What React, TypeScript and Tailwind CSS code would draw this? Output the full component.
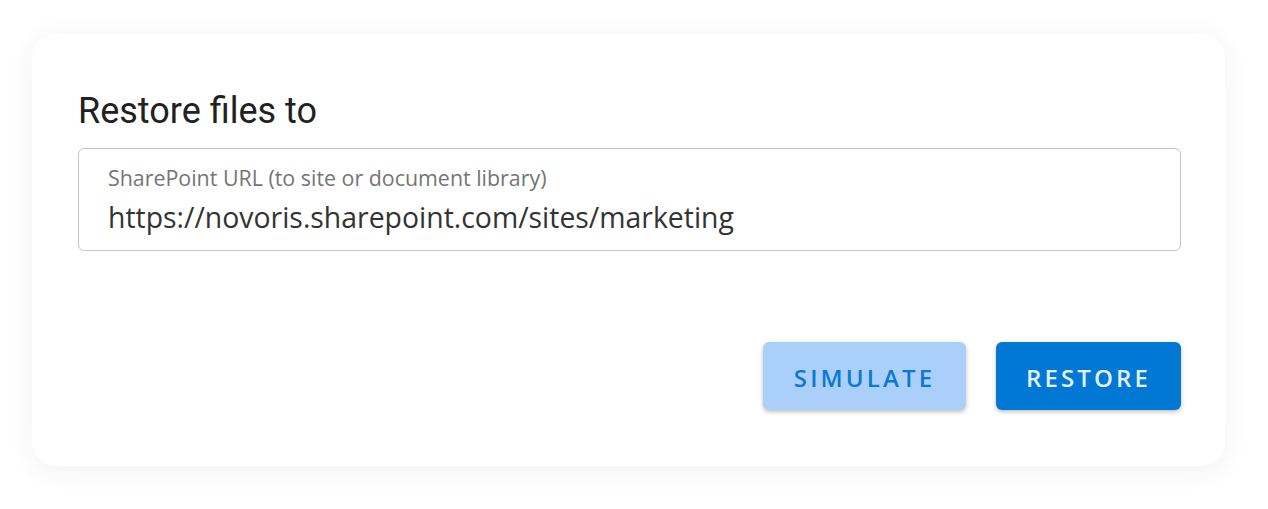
import React from 'react';

export default function App() {
  return (
    <div className="min-h-[509px] w-[1268px] bg-white pl-[32px] pt-[34px]">
      <div className="flex h-[432px] w-[1193px] flex-col rounded-[24px] bg-white pl-[46px] pr-[44px] pt-[57px] shadow-[0_4px_28px_rgba(0,0,0,0.06)]">
        <h1 className="text-[36px] leading-[40px] text-[#212121] [font-family:Roboto,sans-serif]">
          Restore files to
        </h1>
        <div className="mt-[17px] flex h-[103px] flex-col rounded-[6px] border border-[#c4c4c4] px-[29px] pt-[17px] [font-family:'Open_Sans',sans-serif]">
          <label className="text-[21.4px] leading-[24px] text-[#757575]">
            SharePoint URL (to site or document library)
          </label>
          <div className="mt-[9px] text-[28.4px] leading-[36px] text-[#333333]">
            https://novoris.sharepoint.com/sites/marketing
          </div>
        </div>
        <div className="mt-[91px] flex justify-end gap-[30px] [font-family:'Open_Sans',sans-serif]">
          <button className="h-[68px] w-[203px] rounded-[6px] bg-[#aad0fa] pt-[4px] text-[24px] font-semibold tracking-[0.13em] text-[#0a78d4] shadow-[0_2px_4px_rgba(0,0,0,0.25)]">
            SIMULATE
          </button>
          <button className="h-[68px] w-[185px] rounded-[6px] bg-[#0078d4] pt-[4px] text-[24px] font-semibold tracking-[0.13em] text-[#e6f0fa] shadow-[0_2px_4px_rgba(0,0,0,0.25)]">
            RESTORE
          </button>
        </div>
      </div>
    </div>
  );
}
